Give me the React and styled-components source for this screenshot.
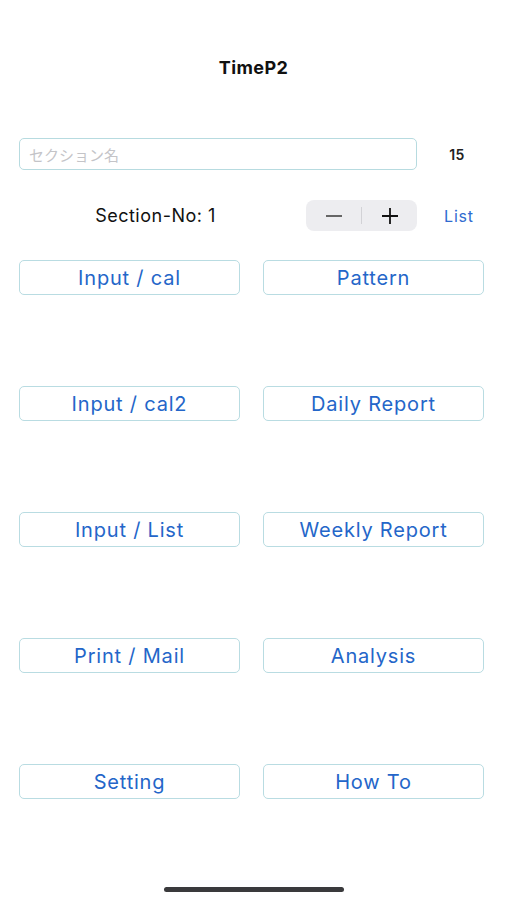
import React from 'react';
import styled, { createGlobalStyle } from 'styled-components';

const Global = createGlobalStyle`
  html, body { margin: 0; padding: 0; background: #fff; }
  body { font-family: Inter, "Noto Sans", "Noto Sans CJK JP", sans-serif; }
`;

const Screen = styled.div`
  position: relative;
  width: 507px;
  height: 900px;
  background: #fff;
  display: flex;
  flex-direction: column;
  padding: 0 23px 0 19px;
  box-sizing: border-box;
`;

const Title = styled.h1`
  margin: 57px 0 0;
  font-size: 18px;
  line-height: 22px;
  font-weight: 700;
  letter-spacing: 0.4px;
  text-align: center;
  color: #111;
  padding-left: 4px;
`;

const FieldRow = styled.div`
  margin-top: 59px;
  display: flex;
  align-items: center;
`;

const NameField = styled.input`
  width: 398px;
  height: 32px;
  box-sizing: border-box;
  border: 1px solid #b7dbe0;
  border-radius: 5px;
  padding: 0 9px;
  font-size: 15px;
  font-family: "Noto Sans CJK JP", sans-serif;
  color: #222;
  outline: none;

  &::placeholder { color: #c4c4c8; }
`;

const Count = styled.span`
  flex: 1;
  text-align: center;
  font-size: 14px;
  font-weight: 600;
  letter-spacing: 0.5px;
  color: #222;
  padding-left: 13px;
`;

const SectionRow = styled.div`
  margin-top: 30px;
  height: 31px;
  display: flex;
  align-items: center;
`;

const SectionLabel = styled.span`
  width: 277px;
  text-align: center;
  font-size: 18px;
  letter-spacing: 0.5px;
  color: #111;
  padding-right: 4px;
  box-sizing: border-box;
`;

const Stepper = styled.div`
  margin-left: 10px;
  width: 111px;
  height: 31px;
  border-radius: 8px;
  background: #ededf0;
  display: flex;
  align-items: center;
`;

const StepButton = styled.button`
  flex: 1;
  height: 100%;
  border: none;
  background: transparent;
  display: flex;
  align-items: center;
  justify-content: center;
  padding: 0;
`;

const StepDivider = styled.div`
  width: 1px;
  height: 17px;
  background: #d2d2d6;
`;

const ListLink = styled.a`
  flex: 1;
  text-align: center;
  font-size: 16px;
  letter-spacing: 0.8px;
  color: #2f6bd0;
  padding-left: 17px;
`;

const Grid = styled.div`
  margin-top: 29px;
  display: grid;
  grid-template-columns: 221px 221px;
  column-gap: 23px;
  row-gap: 91px;
`;

const MenuButton = styled.button`
  height: 35px;
  border: 1px solid #b9dce2;
  border-radius: 5px;
  background: #fff;
  color: #2466c9;
  font-family: Inter, sans-serif;
  font-size: 20px;
  letter-spacing: 0.8px;
  padding: 0;
`;

const HomeBar = styled.div`
  position: absolute;
  left: 164px;
  bottom: 8px;
  width: 180px;
  height: 5px;
  border-radius: 3px;
  background: #3a3a3c;
`;

const items = [
  'Input / cal', 'Pattern',
  'Input / cal2', 'Daily Report',
  'Input / List', 'Weekly Report',
  'Print / Mail', 'Analysis',
  'Setting', 'How To',
];

const App = () => (
  <>
    <Global />
    <Screen>
      <Title>TimeP2</Title>
      <FieldRow>
        <NameField placeholder="セクション名" />
        <Count>15</Count>
      </FieldRow>
      <SectionRow>
        <SectionLabel>Section-No: 1</SectionLabel>
        <Stepper>
          <StepButton>
            <svg width="18" height="18" viewBox="0 0 18 18">
              <path d="M1 9h16" stroke="#444" strokeWidth="1.6" />
            </svg>
          </StepButton>
          <StepDivider />
          <StepButton>
            <svg width="18" height="18" viewBox="0 0 18 18">
              <path d="M1 9h16M9 1v16" stroke="#111" strokeWidth="1.8" />
            </svg>
          </StepButton>
        </Stepper>
        <ListLink>List</ListLink>
      </SectionRow>
      <Grid>
        {items.map((t) => <MenuButton key={t}>{t}</MenuButton>)}
      </Grid>
      <HomeBar />
    </Screen>
  </>
);

export default App;
